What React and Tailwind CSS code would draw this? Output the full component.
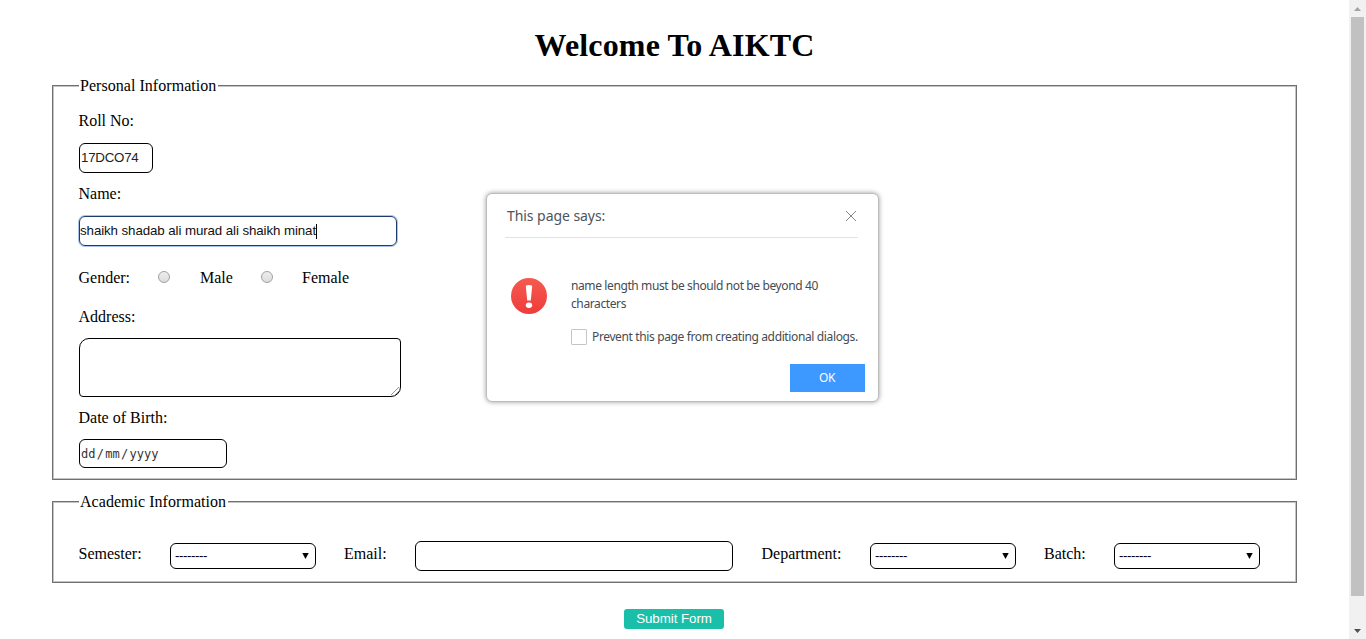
const serif = "font-['Liberation_Serif','Times_New_Roman',serif]";
const label = "-ml-[0.5px] block whitespace-nowrap text-[16px] leading-[18px] text-black";

function Fitted({ width, className = "", children }) {
  return (
    <span className={"block whitespace-nowrap " + className} style={{ width }}>
      {children}
    </span>
  );
}

function Group({ title, titleClass, className, children }) {
  return (
    <section className={"w-[1245px] border border-[#707070] " + className}>
      <div className="h-full border border-[#c4c4c4] pl-[25px]">
        <div className={"-mt-[10px] h-[18px] bg-white pl-[1px] text-[16px] leading-[18px] tracking-[0.04px] whitespace-nowrap " + titleClass}>{title}</div>
        {children}
      </div>
    </section>
  );
}

function Select() {
  return (
    <div className="flex h-[26px] w-[146px] shrink-0 items-center justify-between rounded-[6px] border border-black pr-[6px] pl-[4px]">
      <span className="-mt-[1px] font-['Liberation_Sans',Arial,sans-serif] text-[13.333px] leading-[15px] tracking-[-0.44px] text-black">--------</span>
      <svg width="7" height="6" viewBox="0 0 7 6"><path d="M0.3 0H6.7L3.5 6Z" fill="#000" /></svg>
    </div>
  );
}

function Radio() {
  return <span className="mb-[2px] block size-[12px] shrink-0 rounded-full border border-[#a0a0a0] bg-gradient-to-b from-[#eeeeee] to-[#dcdcdc]" />;
}

function Dialog() {
  return (
    <div className="absolute top-[193px] left-[486px] flex h-[209px] w-[393px] flex-col rounded-[6px] border border-[#bdbdbd] bg-white pl-[18px] font-['Noto_Sans','Open_Sans',sans-serif] text-[#454b52] shadow-[0_0_5px_rgba(0,0,0,0.4)]">
      <div className="flex h-[44px] w-[353px] items-center justify-between border-b border-[#e3e3e3] pr-[2px] pl-[2px]">
        <span className="text-[14px] leading-[20px] tracking-[-0.06px] text-[#4c555c]">This page says:</span>
        <svg width="10" height="10" viewBox="0 0 10 10"><path d="M0 0L10 10M10 0L0 10" stroke="#858585" strokeWidth="1" /></svg>
      </div>
      <div className="flex pt-[39px]">
        <svg className="mt-[1px] ml-[6px] shrink-0" width="36" height="36" viewBox="0 0 36 36">
          <defs>
            <linearGradient id="alert" x1="0" y1="0" x2="0" y2="1">
              <stop offset="0" stopColor="#f55a4e" />
              <stop offset="1" stopColor="#ef3c3c" />
            </linearGradient>
          </defs>
          <circle cx="18" cy="18" r="18" fill="url(#alert)" />
          <path d="M14.8 8Q14.8 7 18 7T21.2 8L19.8 22.5H16.2Z" fill="#fff" />
          <ellipse cx="18" cy="27.3" rx="3.2" ry="2.7" fill="#fff" />
        </svg>
        <div className="ml-[24px] text-[12px] leading-[18px] whitespace-nowrap">
          <div className="tracking-[-0.39px]">name length must be should not be beyond 40</div>
          <div className="tracking-[-0.39px]">characters</div>
          <div className="mt-[15px] flex items-center">
            <span className="mr-[5px] block size-[16px] rounded-[1px] border border-[#c5c5c5]" />
            <span className="tracking-[-0.37px]">Prevent this page from creating additional dialogs.</span>
          </div>
        </div>
      </div>
      <button className="mt-[18px] ml-[285px] h-[28px] w-[75px] bg-[#3d98ff] pr-[1px] text-center text-[12px] leading-[28px] tracking-[-0.5px] text-white">OK</button>
    </div>
  );
}

function Scrollbar() {
  return (
    <div className="flex h-[639px] w-[17px] shrink-0 flex-col items-center bg-[#f1f1f1]">
      <div className="flex h-[17px] items-center"><svg width="7" height="4" viewBox="0 0 7 4"><path d="M0 4H7L3.5 0Z" fill="#a3a3a3" /></svg></div>
      <div className="h-[579px] w-[13px] bg-[#c1c1c1]" />
      <div className="mt-auto flex h-[17px] items-center"><svg width="7" height="4" viewBox="0 0 7 4"><path d="M0 0H7L3.5 4Z" fill="#505050" /></svg></div>
    </div>
  );
}

export default function App() {
  return (
    <div className={"relative flex h-[639px] w-[1366px] overflow-hidden bg-white text-black " + serif}>
      <main className="w-[1349px] pl-[52px]">
        <h1 className="mt-[27px] h-[37px] w-[1245px] text-center text-[32px] leading-[37px] font-bold tracking-[0.16px] whitespace-nowrap">Welcome To AIKTC</h1>
        <Group title="Personal Information" titleClass="w-[139px]" className="mt-[21px] h-[395px]">
          <div className={"mt-[17px] " + label}>Roll No:</div>
          <div className="mt-[13px] h-[30px] w-[74px] rounded-[6px] border border-black pl-[1px] font-['Liberation_Sans',Arial,sans-serif] text-[13.333px] leading-[27px] tracking-[-0.25px] text-[#222]">17DCO74</div>
          <div className={"mt-[12px] " + label}>Name:</div>
          <div className="mt-[13px] flex h-[30px] w-[318px] items-center rounded-[6px] border border-[#1f3a6e] font-['Liberation_Sans',Arial,sans-serif] text-[13.333px] leading-[28px] tracking-[-0.1px] whitespace-nowrap text-[#111] shadow-[0_0_0_1px_#a9c3ee]">
            <span>shaikh shadab ali murad ali shaikh minat</span>
            <span className="h-[15px] w-px bg-black" />
          </div>
          <div className="mt-[23px] flex h-[18px] items-center">
            <Fitted width={79.5} className="-ml-[0.5px] text-[16px] leading-[18px]">Gender:</Fitted>
            <Radio />
            <Fitted width={61} className="ml-[30px] text-[16px] leading-[18px]">Male</Fitted>
            <Radio />
            <Fitted width={60} className="ml-[29px] text-[16px] leading-[18px]">Female</Fitted>
          </div>
          <div className={"mt-[21px] " + label}>Address:</div>
          <div className="mt-[12px] flex h-[59px] w-[322px] items-end justify-end rounded-tl-[10px] rounded-tr-[4px] rounded-br-[10px] rounded-bl-[4px] border border-black">
            <svg width="9" height="9" viewBox="0 0 9 9"><path d="M0 8L8 0M4 8L8 4" stroke="#777" strokeWidth="0.8" /></svg>
          </div>
          <div className={"mt-[12px] " + label}>Date of Birth:</div>
          <div className="mt-[12px] flex h-[29px] w-[148px] items-center rounded-[6px] border border-black pl-[1px] font-['DejaVu_Sans_Mono',monospace] text-[12px] text-[#333]">
            <span>dd</span>
            <span className="mx-[1.3px]">/</span>
            <span>mm</span>
            <span className="mx-[1.3px]">/</span>
            <span>yyyy</span>
          </div>
        </Group>
        <Group title="Academic Information" titleClass="w-[149px]" className="mt-[21px] h-[82px]">
          <div className="mt-[30px] flex h-[30px] items-center">
            <Fitted width={91} className="mr-[0.5px] mb-[4px] -ml-[0.5px] text-[16px] leading-[18px]">Semester:</Fitted>
            <Select />
            <Fitted width={71} className="mb-[4px] ml-[28px] text-[16px] leading-[18px]">Email:</Fitted>
            <div className="h-[30px] w-[318px] rounded-[6px] border border-black" />
            <Fitted width={108.5} className="mb-[4px] ml-[28.5px] text-[16px] leading-[18px]">Department:</Fitted>
            <Select />
            <Fitted width={70} className="mb-[4px] ml-[28px] text-[16px] leading-[18px]">Batch:</Fitted>
            <Select />
          </div>
        </Group>
        <button className="mt-[26px] ml-[572px] block h-[20px] w-[100px] rounded-[3px] bg-[#1abfa9] pb-[1px] text-center font-['Liberation_Sans',Arial,sans-serif] text-[13.333px] leading-[19px] tracking-[-0.05px] whitespace-nowrap text-white">Submit Form</button>
      </main>
      <Scrollbar />
      <Dialog />
    </div>
  );
}
